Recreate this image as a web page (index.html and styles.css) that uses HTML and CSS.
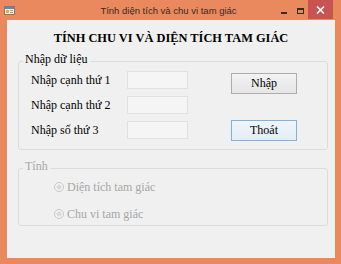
FILE: index.html
```html
<!DOCTYPE html>
<html lang="vi">
<head>
  <meta charset="UTF-8">
  <title>Tính diện tích và chu vi tam giác</title>
  <link rel="stylesheet" href="styles.css">
</head>
<body>
  <div class="window">
    <!-- thanh tiêu đề -->
    <div class="titlebar">
      <div class="app-icon">
        <svg width="11" height="11" viewBox="0 0 11 11">
          <rect x="0.5" y="1.5" width="10" height="8" fill="#f4f0e0" stroke="#8a7a5a"/>
          <rect x="1" y="2" width="9" height="2" fill="#5c86c4"/>
          <rect x="2" y="5" width="3" height="3" fill="#e0b040"/>
          <rect x="6" y="5" width="3" height="1" fill="#a0a0a0"/>
          <rect x="6" y="7" width="3" height="1" fill="#a0a0a0"/>
        </svg>
      </div>
      <div class="title">Tính diện tích và chu vi tam giác</div>
      <div class="caption-buttons">
        <span class="cap-btn minimize"><i></i></span>
        <span class="cap-btn maximize"><i></i></span>
        <span class="cap-btn close">
          <svg width="9" height="8" viewBox="0 0 9 8">
            <path d="M1 0.5 L8 7.5 M8 0.5 L1 7.5" stroke="#fff" stroke-width="1.6"/>
          </svg>
        </span>
      </div>
    </div>

    <!-- vùng nội dung -->
    <div class="client">
      <h1 class="heading">TÍNH CHU VI VÀ DIỆN TÍCH TAM GIÁC</h1>

      <fieldset class="group">
        <legend>Nhập dữ liệu</legend>
        <div class="entry">
          <div class="fields">
            <div class="field-row">
              <label class="field-label">Nhập cạnh thứ 1</label>
              <span class="textbox"></span>
            </div>
            <div class="field-row">
              <label class="field-label">Nhập cạnh thứ 2</label>
              <span class="textbox"></span>
            </div>
            <div class="field-row">
              <label class="field-label">Nhập số thứ 3</label>
              <span class="textbox"></span>
            </div>
          </div>
          <div class="actions">
            <button class="button">Nhập</button>
            <button class="button focused">Thoát</button>
          </div>
        </div>
      </fieldset>

      <fieldset class="group disabled">
        <legend>Tính</legend>
        <div class="options">
          <div class="option"><span class="radio"></span>Diện tích tam giác</div>
          <div class="option"><span class="radio"></span>Chu vi tam giác</div>
        </div>
      </fieldset>
    </div>
  </div>
</body>
</html>
```

FILE: styles.css
```css
/* Reset */
* {
  margin: 0;
  padding: 0;
  box-sizing: border-box;
}
body {
  font-family: "Liberation Serif", "Times New Roman", serif;
  background: #fff;
}
/* Khung cửa sổ */
.window {
  width: 341px;
  height: 264px;
  background: #e9895d;
  display: flex;
  flex-direction: column;
}
.titlebar {
  height: 20px;
  display: grid;
  grid-template-columns: 1fr auto 1fr;
  align-items: center;
  padding: 0 8px 0 4px;
}
.app-icon {
  display: flex;
  align-items: center;
  height: 11px;
}
.title {
  font-family: "Segoe UI", "Liberation Sans", Arial, sans-serif;
  font-size: 9.5px;
  color: #3a2a22;
}
.caption-buttons {
  justify-self: end;
  align-self: start;
  display: flex;
}
.cap-btn {
  display: flex;
  align-items: center;
  justify-content: center;
  width: 16px;
  height: 19px;
}
.minimize i {
  display: block;
  width: 6px;
  height: 2px;
  margin-top: 6px;
  background: #3a2a22;
}
.maximize i {
  display: block;
  width: 7px;
  height: 6px;
  margin-top: 2px;
  border: 1px solid #3a2a22;
  border-top-width: 2px;
}
.close {
  width: 25px;
  background: #c75353;
}
/* Vùng nội dung */
.client {
  flex: 1;
  margin: 0 6px 6px 7px;
  background: #f0f0f0;
  display: flex;
  flex-direction: column;
}
.heading {
  margin-top: 11px;
  text-align: center;
  font-size: 12.4px;
  line-height: 15px;
  font-weight: bold;
  color: #000;
}
/* Group box */
.group {
  margin: 7px 7px 0 11px;
  padding: 0 0 8px 4px;
  border: 1px solid #dcdcdc;
  border-radius: 3px;
}
.group legend {
  font-size: 12px;
  line-height: 12px;
  padding: 0 2px 4px;
  color: #000;
}
.entry {
  display: flex;
  margin-left: 8px;
}
.fields {
  display: flex;
  flex-direction: column;
  gap: 3px;
}
.field-row {
  height: 22px;
  display: flex;
  align-items: center;
}
.field-label {
  width: 96px;
  font-size: 12px;
  color: #000;
}
.textbox {
  width: 61px;
  height: 18px;
  background: #f5f5f5;
  border: 1px solid #e1e1e1;
}
.actions {
  display: flex;
  flex-direction: column;
  gap: 26px;
  padding-top: 4px;
  margin-left: 43px;
}
.button {
  width: 66px;
  height: 21px;
  font-family: "Liberation Serif", "Times New Roman", serif;
  font-size: 12px;
  color: #000;
  background: linear-gradient(#f3f3f3, #e6e6e6);
  border: 1px solid #adadad;
}
.button.focused {
  border-color: #7fb1e3;
  background: linear-gradient(#eef5fb, #e3edf7);
}
/* Nhóm bị vô hiệu */
.group.disabled {
  margin-top: 10px;
  padding-bottom: 1px;
}
.group.disabled legend {
  color: #a6a6a6;
}
.options {
  display: flex;
  flex-direction: column;
  gap: 7px;
  margin-top: 1px;
  margin-left: 31px;
}
.option {
  height: 20px;
  display: flex;
  align-items: center;
  font-size: 12px;
  color: #a6a6a6;
}
.radio {
  width: 10px;
  height: 10px;
  margin-right: 3px;
  border-radius: 50%;
  border: 1px solid #c8c8c8;
  background: radial-gradient(circle, #dadada 0 2px, #f4f4f4 3px);
}
```
